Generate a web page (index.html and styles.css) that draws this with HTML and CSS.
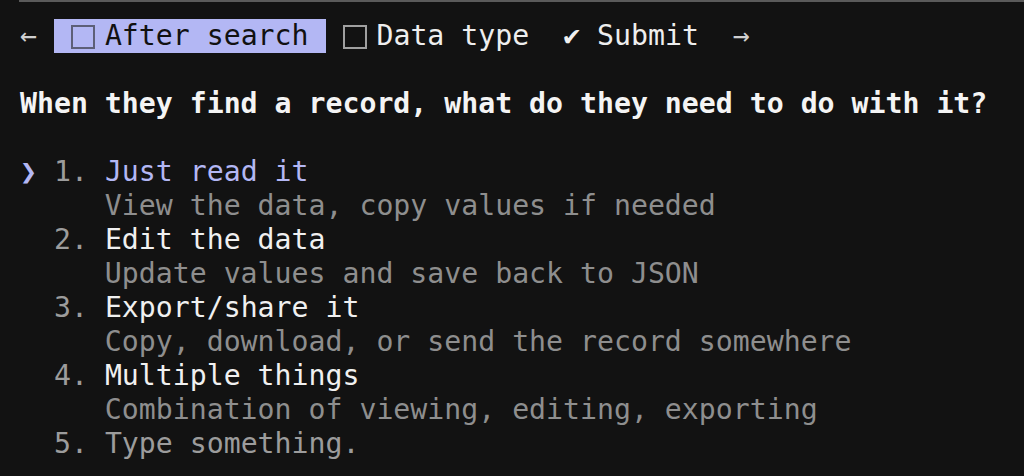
FILE: index.html
```html
<!DOCTYPE html>
<html lang="en">
<head>
<meta charset="utf-8">
<title>Question</title>
<link rel="stylesheet" href="styles.css">
</head>
<body>
<div class="term">
  <div class="topbar"></div>
  <div class="content">
    <div class="line tabs"><span class="cell arrow">←</span> <span class="tab active"> <span class="cb"></span> After search </span> <span class="cb off"></span> Data type  <span class="cell check">✔</span> Submit  <span class="cell arrow">→</span></div>
    <div class="line"> </div>
    <div class="line question">When they find a record, what do they need to do with it?</div>
    <div class="line"> </div>
    <div class="line"><span class="cell pointer">❯</span> <span class="num">1.</span> <span class="title selected">Just read it</span></div>
    <div class="line desc">     View the data, copy values if needed</div>
    <div class="line">  <span class="num">2.</span> <span class="title">Edit the data</span></div>
    <div class="line desc">     Update values and save back to JSON</div>
    <div class="line">  <span class="num">3.</span> <span class="title">Export/share it</span></div>
    <div class="line desc">     Copy, download, or send the record somewhere</div>
    <div class="line">  <span class="num">4.</span> <span class="title">Multiple things</span></div>
    <div class="line desc">     Combination of viewing, editing, exporting</div>
    <div class="line">  <span class="num">5.</span> <span class="title muted">Type something.</span></div>
  </div>
</div>
</body>
</html>
```
FILE: styles.css
```css
html, body {
  margin: 0;
  padding: 0;
  background: #121212;
}
.term {
  width: 1024px;
  height: 476px;
  overflow: hidden;
  background: #121212;
  font-family: "DejaVu Sans Mono", "Liberation Mono", monospace;
  font-size: 28.2px;
  color: #eeeeee;
}
.topbar {
  height: 2px;
  margin-left: 19px;
  background: #5a5a5a;
}
.content {
  padding: 17px 0 0 20px;
}
.line {
  white-space: pre;
  height: 34px;
  line-height: 34px;
}
.cell {
  display: inline-block;
  width: 1ch;
  overflow: visible;
  text-align: left;
}
.tabs {
  color: #eeeeee;
}
.arrow {
  color: #cfcfcf;
}
.tab.active {
  display: inline-block;
  height: 34px;
  background: #b3b7f4;
  color: #111111;
  vertical-align: top;
}
.cb {
  display: inline-block;
  box-sizing: border-box;
  width: 24px;
  height: 24px;
  margin-right: calc(1ch - 24px);
  border: 2px solid #5d5f78;
  vertical-align: -4px;
}
.cb.off {
  border-color: #a0a0a0;
}
.check {
  color: #f0f0f0;
}
.question {
  font-weight: bold;
  color: #f4f4f4;
}
.pointer {
  color: #b3b7f4;
}
.num {
  color: #9c9c9c;
}
.title {
  color: #f0f0f0;
}
.title.selected {
  color: #b3b7f4;
}
.title.muted {
  color: #9c9c9c;
}
.desc {
  color: #8e8e8e;
}
```
